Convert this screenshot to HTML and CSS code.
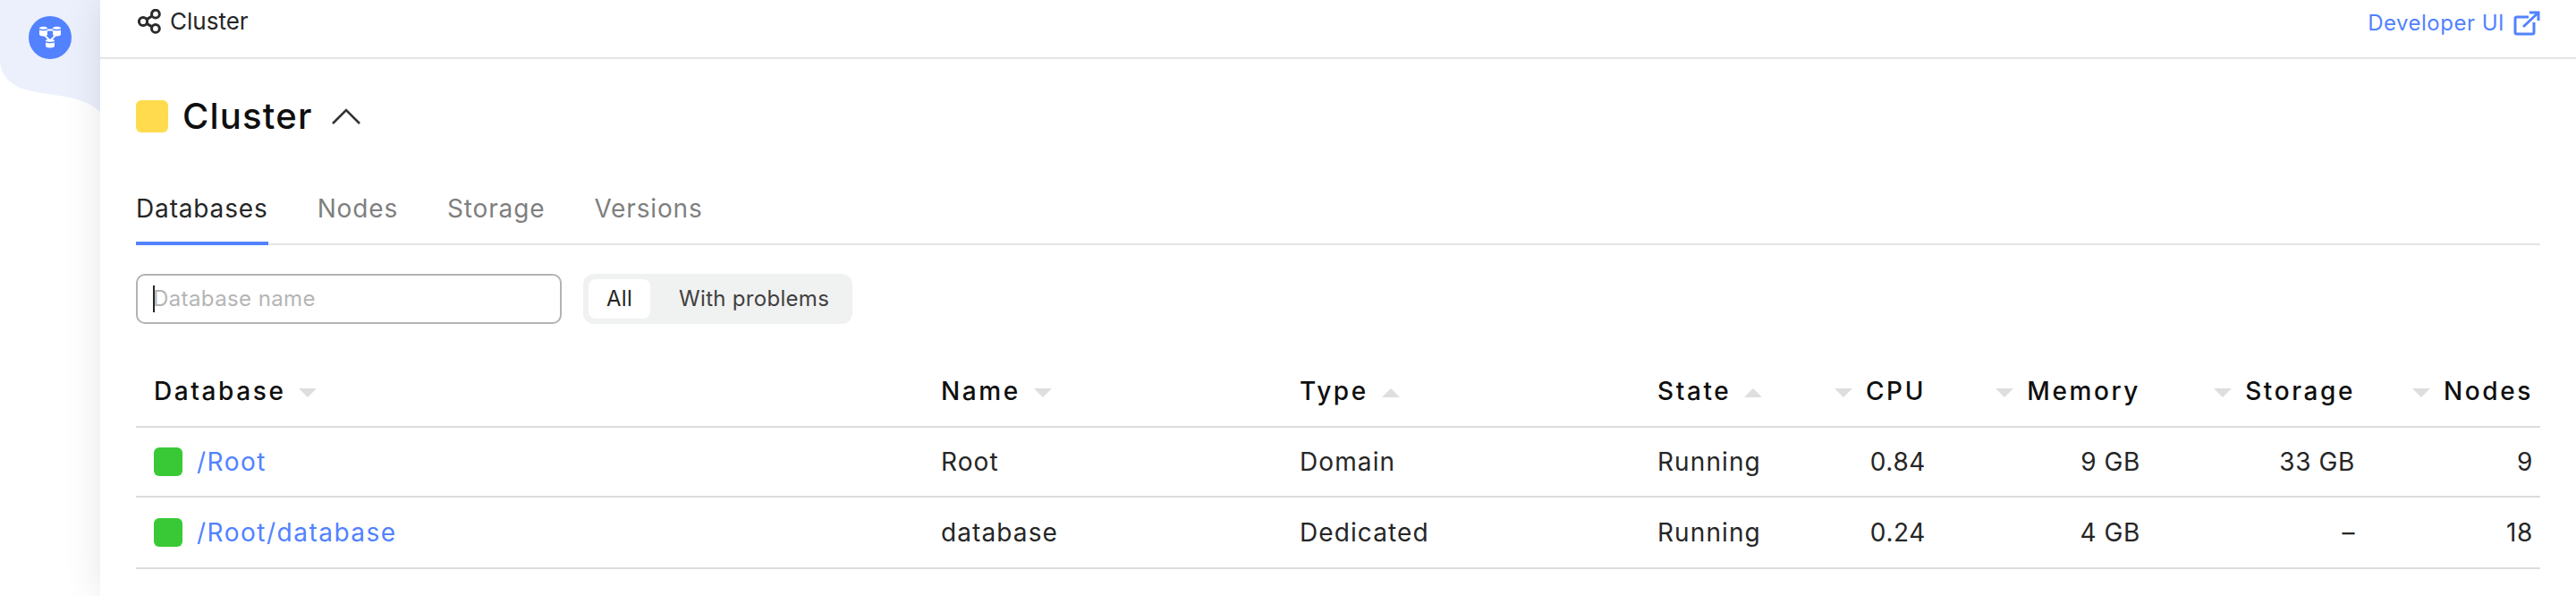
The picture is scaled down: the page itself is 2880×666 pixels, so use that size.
FILE: index.html
```html
<!DOCTYPE html>
<html lang="en">
<head>
<meta charset="utf-8">
<title>Cluster</title>
<link rel="stylesheet" href="styles.css">
</head>
<body>
<div class="app">
  <aside class="sidebar">
    <svg class="wave" viewBox="0 0 112 126" preserveAspectRatio="none" aria-hidden="true"><path d="M0 0H112V125C100 114 84 109 60 106C34 102 20 100 10 90C3 83 0 76 0 66Z"/></svg>
    <span class="logo">
      <svg viewBox="0 0 48 48" width="48" height="48" aria-hidden="true">
        <g fill="#fff">
          <path d="M12 13.5c0-2.400 9-2.400 9 0v.5c-1.500 1-7.500 1-9 0z"/>
          <path d="M12 15.500c2 1 7 1 9 0v5c0 2.500-9 2.500-9 0z"/>
          <path d="M27 13.500c0-2.400 9-2.400 9 0v.5c-1.500 1-7.500 1-9 0z"/>
          <path d="M27 15.500c2 1 7 1 9 0v5c0 2.500-9 2.500-9 0z"/>
          <path d="M19 27.500c0-2.400 10-2.400 10 0v.5c-1.500 1-8.500 1-10 0z"/>
          <path d="M19 29.500c2 1 8 1 10 0v4c0 2.500-10 2.500-10 0z"/>
        </g>
        <path d="M21 15.500h6M18 21.500l5 5M30 21.500l-5 5" stroke="#fff" stroke-width="1.800" fill="none"/>
      </svg>
    </span>
  </aside>
  <main class="main">
    <header class="topbar">
      <div class="crumb">
        <svg viewBox="0 0 28 28" width="28" height="28" fill="none" stroke="#2b2b2b" stroke-width="3" aria-hidden="true">
          <circle cx="8" cy="14" r="4.600"/><circle cx="21.900" cy="5.700" r="4.400"/><circle cx="21.900" cy="21.900" r="4.400"/>
          <path d="M12 11.600l5.500-3.400M12 16.400l5.500 3.200"/>
        </svg>
        <span>Cluster</span>
      </div>
      <a class="devlink" href="#">Developer UI
        <svg viewBox="0 0 30 28" width="30" height="28" fill="none" stroke="#5282ff" stroke-width="3" aria-hidden="true">
          <path d="M17 7H4a2 2 0 0 0-2 2v15a2 2 0 0 0 2 2h17a2 2 0 0 0 2-2V13"/>
          <path d="M11 18L28 2M18 2h10v9"/>
        </svg>
      </a>
    </header>
    <section class="content">
      <div class="title-row">
        <span class="status status-yellow"></span>
        <h1 class="title">Cluster</h1>
        <svg class="caret" viewBox="0 0 32 18" width="32" height="18" fill="none" stroke="#333" stroke-width="2.600" aria-hidden="true"><path d="M1 17L16 2l15 15"/></svg>
      </div>
      <nav class="tabs">
        <a class="tab active" href="#">Databases</a>
        <a class="tab" href="#">Nodes</a>
        <a class="tab" href="#">Storage</a>
        <a class="tab" href="#">Versions</a>
      </nav>
      <div class="controls">
        <div class="search"><i class="cursor"></i><span>Database name</span></div>
        <div class="toggle">
          <span class="opt on">All</span>
          <span class="opt">With problems</span>
        </div>
      </div>
      <table class="grid">
        <colgroup>
          <col class="c1"><col class="c2"><col class="c3"><col class="c4"><col class="c5"><col class="c6"><col class="c7"><col class="c8">
        </colgroup>
        <thead>
          <tr>
            <th>Database<i class="sort down after"></i></th>
            <th>Name<i class="sort down after"></i></th>
            <th>Type<i class="sort up after"></i></th>
            <th>State<i class="sort up after"></i></th>
            <th class="num"><i class="sort down before"></i>CPU</th>
            <th class="num"><i class="sort down before"></i>Memory</th>
            <th class="num"><i class="sort down before"></i>Storage</th>
            <th class="num"><i class="sort down before"></i>Nodes</th>
          </tr>
        </thead>
        <tbody>
          <tr>
            <td><span class="db"><span class="status status-green"></span><a href="#">/Root</a></span></td>
            <td>Root</td><td>Domain</td><td>Running</td>
            <td class="num">0.84</td><td class="num">9 GB</td><td class="num">33 GB</td><td class="num">9</td>
          </tr>
          <tr>
            <td><span class="db"><span class="status status-green"></span><a href="#">/Root/database</a></span></td>
            <td>database</td><td>Dedicated</td><td>Running</td>
            <td class="num">0.24</td><td class="num">4 GB</td><td class="num">–</td><td class="num">18</td>
          </tr>
        </tbody>
      </table>
    </section>
  </main>
</div>
</body>
</html>
```
FILE: styles.css
```css
* { box-sizing: border-box; }
html, body { margin: 0; height: 100%; background: #fff; overflow: hidden; }
body { font-family: Inter, "Liberation Sans", sans-serif; color: #262626; }
a { text-decoration: none; color: inherit; }

.app { display: flex; height: 666px; }

.sidebar { position: relative; width: 112px; flex: none; }
.wave { position: absolute; left: 0; top: 0; width: 112px; height: 126px; }
.wave path { fill: #ecf0fd; }
.logo {
  position: absolute; left: 32px; top: 18px; width: 48px; height: 48px;
  border-radius: 50%; background: #5282ff; display: block;
}
.logo svg { display: block; }

.main {
  flex: 1; min-width: 0; background: #fff;
  box-shadow: 0 0 40px rgba(0, 0, 0, .1);
  position: relative;
}

.topbar {
  height: 66px; border-bottom: 2px solid #e5e5e5;
  display: flex; align-items: flex-start; justify-content: space-between;
  padding: 8px 40px 0 40px;
}
.crumb { display: flex; align-items: center; gap: 10px; font-size: 26px; line-height: 32px; color: #262626; height: 32px; }
.devlink { display: flex; align-items: center; gap: 10px; font-size: 24px; letter-spacing: .5px; line-height: 32px; color: #5282ff; height: 32px; margin-top: 2px; }

.content { padding: 46px 40px 0; }

.title-row { display: flex; align-items: center; height: 36px; }
.status { display: block; flex: none; }
.status-yellow { width: 36px; height: 36px; border-radius: 6px; background: #ffdb4d; }
.title { margin: 0 0 0 16px; font-size: 40px; font-weight: 500; line-height: 48px; color: #0f0f0f; letter-spacing: 1.2px; }
.caret { margin-left: 21px; }

.tabs { display: flex; gap: 55px; margin-top: 52px; height: 74px; border-bottom: 2px solid #e5e5e5; }
.tab { font-size: 28px; letter-spacing: .85px; line-height: 36px; color: #7f7f7f; height: 72px; padding-top: 15px; }
.tab.active { color: #262626; border-bottom: 4px solid #5282ff; height: 74px; }

.controls { display: flex; gap: 24px; margin-top: 32px; height: 56px; }
.search {
  position: relative; width: 476px; height: 56px; border: 2px solid #b3b3b3; border-radius: 10px;
  font-size: 24px; letter-spacing: .4px; line-height: 52px; color: #b5b5b5; padding-left: 17px;
}
.cursor { position: absolute; left: 17px; top: 11px; width: 2px; height: 30px; background: #262626; }
.toggle { display: flex; align-items: center; padding: 6px; background: #f0f1f1; border-radius: 12px; height: 56px; }
.opt { font-size: 24px; letter-spacing: .3px; line-height: 44px; height: 44px; padding: 0 20px; color: #404040; border-radius: 8px; }
.opt.on { background: #fff; color: #262626; }
.opt:last-child { padding: 0 20px 0 32px; }

.grid { border-collapse: collapse; table-layout: fixed; width: 2688px; margin-top: 37px; font-size: 28px; letter-spacing: 1.1px; }
.c1 { width: 880px; } .c2 { width: 401px; } .c3 { width: 400px; } .c4 { width: 166px; }
.c5 { width: 171px; } .c6 { width: 240px; } .c7 { width: 240px; } .c8 { width: 190px; }
.grid th {
  height: 78px; padding: 0 20px 2px; text-align: left; font-weight: 500; color: #0f0f0f;
  letter-spacing: 2.600px; border-bottom: 2px solid #dcdcdc; white-space: nowrap;
}
.grid td { height: 78px; padding: 0 20px; border-bottom: 2px solid #dcdcdc; color: #262626; white-space: nowrap; }
.grid tbody tr:last-child td { height: 80px; }
.grid .num { text-align: right; padding-right: 17px; }
.grid td.num { letter-spacing: .6px; }
.grid tr > :last-child { padding-right: 8px; }

.sort { display: inline-block; width: 0; height: 0; border-left: 10px solid transparent; border-right: 10px solid transparent; vertical-align: middle; }
.sort.down { border-top: 10px solid #dedede; }
.sort.up { border-bottom: 10px solid #dedede; }
.sort.after { margin-left: 15px; }
.sort.before { margin-right: 15px; }

.db { display: flex; align-items: center; gap: 16px; }
.db a { color: #5282ff; letter-spacing: 1.5px; }
.status-green { width: 32px; height: 32px; border-radius: 6px; background: #3ac936; }
```
